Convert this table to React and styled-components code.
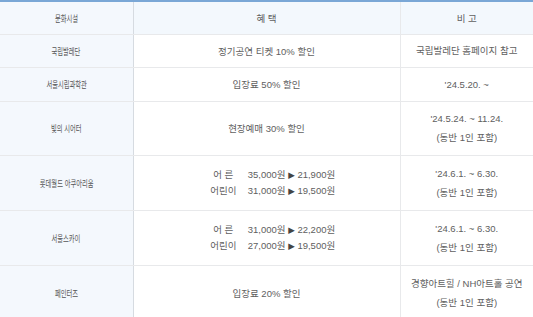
import styled, { createGlobalStyle } from 'styled-components'

const GlobalStyle = createGlobalStyle`
    body {
        margin: 0;
        background: #fff;
        font-family: "Liberation Sans", "Noto Sans CJK KR", sans-serif;
    }
`

const rows = [
    { name: '국립발레단', benefit: '정기공연 티켓 10% 할인', note: ['국립발레단 홈페이지 참고'], h: 33 },
    { name: '서울시립과학관', benefit: '입장료 50% 할인', note: ["'24.5.20. ~"], h: 34 },
    { name: '빛의 시어터', benefit: '현장예매 30% 할인', note: ["'24.5.24. ~ 11.24.", '(동반 1인 포함)'], h: 54 },
    {
        name: '롯데월드 아쿠아리움',
        prices: [['어 른', '35,000원', '21,900원'], ['어린이', '31,000원', '19,500원']],
        note: ["'24.6.1. ~ 6.30.", '(동반 1인 포함)'],
        h: 55
    },
    {
        name: '서울스카이',
        prices: [['어 른', '31,000원', '22,200원'], ['어린이', '27,000원', '19,500원']],
        note: ["'24.6.1. ~ 6.30.", '(동반 1인 포함)'],
        h: 55
    },
    { name: '페인터즈', benefit: '입장료 20% 할인', note: ['경향아트힐 / NH아트홀 공연', '(동반 1인 포함)'], h: 55 },
]

function App() {
    return (
        <>
            <GlobalStyle />
            <Table>
                <colgroup>
                    <col style={{ width: 133 }} />
                    <col style={{ width: 267 }} />
                    <col />
                </colgroup>
                <thead>
                    <Row $h={33}>
                        <NameCell as="th" $head><Narrow>문화시설</Narrow></NameCell>
                        <Cell as="th" $head>혜 택</Cell>
                        <Cell as="th" $head>비 고</Cell>
                    </Row>
                </thead>
                <tbody>
                    {rows.map((r) => (
                        <Row key={r.name} $h={r.h}>
                            <NameCell><Narrow>{r.name}</Narrow></NameCell>
                            <Cell>
                                {r.prices ? (
                                    <Prices>
                                        {r.prices.map(([who, from, to]) => (
                                            <PriceLine key={who}>
                                                <Who>{who}</Who>
                                                <span>{from} <Arrow>▶</Arrow> {to}</span>
                                            </PriceLine>
                                        ))}
                                    </Prices>
                                ) : r.benefit}
                            </Cell>
                            <Cell>
                                {r.note.map((n) => <Line key={n}>{n}</Line>)}
                            </Cell>
                        </Row>
                    ))}
                </tbody>
            </Table>
        </>
    )
}

const Table = styled.table`
    width: 533px;
    table-layout: fixed;
    border-collapse: collapse;
    border-top: 2px solid #7aa7d6;
    color: #606060;
    font-size: 9.5px;
`

const Row = styled.tr`
    height: ${(p) => p.$h}px;
`

const Cell = styled.td`
    padding: 0;
    text-align: center;
    vertical-align: middle;
    font-weight: normal;
    background: ${(p) => (p.$head ? '#f3f8fd' : '#fff')};
    border-bottom: 1px solid #e8e9eb;
    border-left: 1px solid #e8e9eb;
`

const NameCell = styled(Cell)`
    background: #f4f8fd;
    border-left: none;
    border-right: 1px solid #d6dbe1;
    white-space: nowrap;
    color: #555;
`

const Narrow = styled.span`
    display: inline-block;
    font-size: 9.5px;
    transform: scaleX(0.66);
`

const Line = styled.div`
    line-height: 19px;
`

const Prices = styled.div`
    display: inline-grid;
    margin-left: 12px;
`

const PriceLine = styled.div`
    display: flex;
    gap: 11px;
    line-height: 15px;
    text-align: left;
    white-space: nowrap;
`

const Who = styled.span`
    width: 27px;
    text-align: center;
`

const Arrow = styled.span`
    font-family: "DejaVu Sans", sans-serif;
    font-size: 8.5px;
    color: #444;
`

export default App
